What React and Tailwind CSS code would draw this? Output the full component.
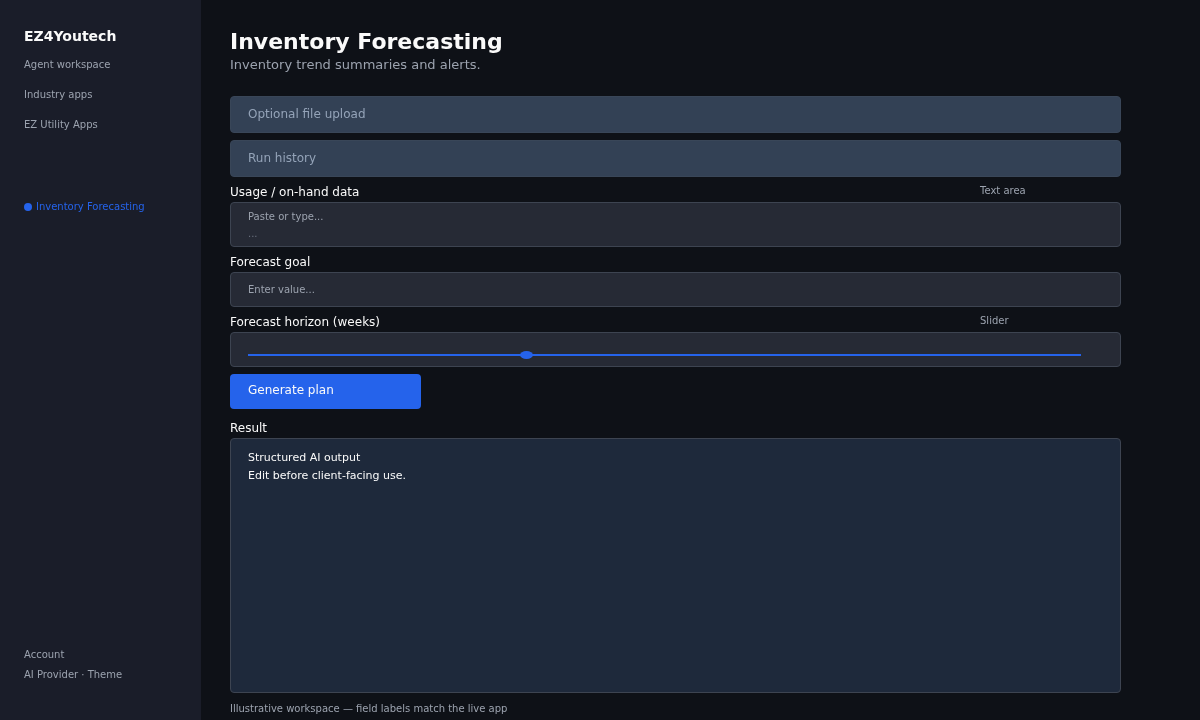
const font = { fontFamily: '"DejaVu Sans", sans-serif' };

function FieldLabel({ children, hint, className = "" }) {
  return (
    <div className={`flex h-[14px] items-center justify-between ${className}`}>
      <span className="relative top-[1px] text-[12px] leading-[14px] text-[#fafafa]">{children}</span>
      {hint && (
        <span className="w-[141px] text-[10px] leading-[14px] text-[#9ca3af]">{hint}</span>
      )}
    </div>
  );
}

function Expander({ children, className = "" }) {
  return (
    <div
      className={`flex h-[37px] items-center rounded-[4px] border border-[#394658] bg-[#334155] pb-[2px] pl-[17px] text-[12px] text-[#94a3b8] ${className}`}
    >
      {children}
    </div>
  );
}

export default function App() {
  return (
    <div className="flex h-[720px] w-[1200px] overflow-hidden bg-[#0e1117]" style={font}>
      <aside className="w-[201px] shrink-0 bg-[#1a1d29]">
        <div className="flex h-full flex-col pl-[24px] will-change-transform">
          <div className="mt-[28px] text-[14px] leading-[16px] font-bold text-[#fafafa]">EZ4Youtech</div>
          <nav className="mt-[15px] flex flex-col gap-[18px] text-[10px] leading-[12px] text-[#9ca3af]">
            <a>Agent workspace</a>
            <a>Industry apps</a>
            <a>EZ Utility Apps</a>
          </nav>
          <div className="mt-[70px] flex items-center text-[10px] leading-[12px] text-[#2563eb]">
            <span className="mr-[4px] h-[8px] w-[8px] rounded-full bg-[#2563eb]" />
            Inventory Forecasting
          </div>
          <div className="mt-auto mb-[39px] flex flex-col gap-[8px] text-[10px] leading-[12px] text-[#9ca3af]">
            <a>Account</a>
            <a>AI Provider · Theme</a>
          </div>
        </div>
      </aside>

      <main className="flex-1 pl-[29px]">
        <div className="flex w-[891px] flex-col will-change-transform">
          <h1 className="mt-[29px] text-[22px] leading-[26px] font-bold text-[#fafafa]">
            Inventory Forecasting
          </h1>
          <p className="mt-[2px] text-[13px] leading-[15px] text-[#9ca3af]">
            Inventory trend summaries and alerts.
          </p>

          <Expander className="mt-[24px]">Optional file upload</Expander>
          <Expander className="mt-[7px]">Run history</Expander>

          <FieldLabel hint="Text area" className="mt-[7px]">Usage / on-hand data</FieldLabel>
          <div className="mt-[4px] h-[45px] rounded-[4px] border border-[#3d4451] bg-[#262a35] pt-[6px] pl-[17px] text-[10px] leading-[16px] text-[#9ca3af]">
            <div>Paste or type...</div>
            <div className="mt-[1px] text-[#6b7280]">...</div>
          </div>

          <FieldLabel className="mt-[7px]">Forecast goal</FieldLabel>
          <div className="mt-[4px] flex h-[35px] items-center rounded-[4px] border border-[#3d4451] bg-[#262a35] pl-[17px] text-[10px] text-[#9ca3af]">
            Enter value...
          </div>

          <FieldLabel hint="Slider" className="mt-[7px]">Forecast horizon (weeks)</FieldLabel>
          <div className="relative mt-[4px] h-[35px] rounded-[4px] border border-[#3d4451] bg-[#262a35]">
            <div className="absolute top-[21px] left-[17px] h-[2px] w-[833px] bg-[#2563eb]" />
            <div className="absolute top-[18px] left-[289px] h-[8px] w-[13px] rounded-[50%] bg-[#2563eb]" />
          </div>

          <button
            type="button"
            className="mt-[7px] h-[35px] w-[191px] rounded-[4px] bg-[#2563eb] pb-[3px] pl-[18px] text-left text-[12px] text-[#fafafa]"
          >
            Generate plan
          </button>

          <FieldLabel className="mt-[11px]">Result</FieldLabel>
          <div className="mt-[4px] h-[255px] rounded-[4px] border border-[#3d4451] bg-[#1e293b] pt-[10px] pl-[17px] text-[11px] leading-[18px] text-[#fafafa]">
            <div>Structured AI output</div>
            <div>Edit before client-facing use.</div>
          </div>

          <p className="mt-[10px] text-[10px] leading-[12px] text-[#9ca3af]">
            Illustrative workspace — field labels match the live app
          </p>
        </div>
      </main>
    </div>
  );
}
